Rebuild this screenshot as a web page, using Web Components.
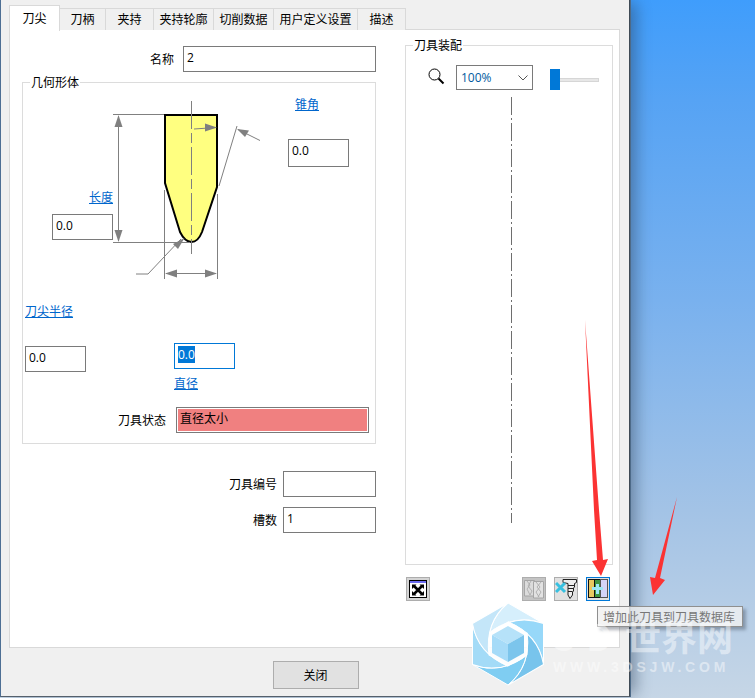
<!DOCTYPE html>
<html lang="zh">
<head>
<meta charset="utf-8">
<title>刀具</title>
<style>
  html, body { margin: 0; height: 100%; overflow: hidden; }
  body { font: 12px/16px "Noto Sans CJK SC", "Noto Sans", sans-serif; color: #000; }
</style>
</head>
<body>

<desk-top>
  <cam-window>
    <tab-strip slot="tabs">
      <tool-tab active width="51">刀尖</tool-tab>
      <tool-tab width="46">刀柄</tool-tab>
      <tool-tab width="48">夹持</tool-tab>
      <tool-tab width="60">夹持轮廓</tool-tab>
      <tool-tab width="60">切削数据</tool-tab>
      <tool-tab width="84">用户定义设置</tool-tab>
      <tool-tab width="48">描述</tool-tab>
    </tab-strip>

    <tip-page slot="left"></tip-page>
    <assembly-pane slot="right"></assembly-pane>

    <close-button slot="footer">关闭</close-button>
  </cam-window>
  <screen-notes></screen-notes>
</desk-top>

<script>
class DeskTop extends HTMLElement {
    constructor() {
        super();
        this.attachShadow({ mode: 'open' });
        this.shadowRoot.innerHTML = `
      <style>
        :host {
          display: block;
          position: relative;
          width: 755px;
          height: 698px;
          overflow: hidden;
          background: linear-gradient(180deg, #3f9dfc 0, #56a3f4 100px, #79b1ee 300px, #a3c3e6 510px, #c6d6e6 698px);
        }
      </style>
      <slot></slot>
    `;
    }
}

class CamWindow extends HTMLElement {
    constructor() {
        super();
        this.attachShadow({ mode: 'open' });
        this.shadowRoot.innerHTML = `
      <style>
        :host {
          display: flex;
          flex-direction: column;
          box-sizing: border-box;
          width: 630px;
          height: 697px;
          background: #f0f0f0;
          border-left: 1px solid #4d6f94;
          border-right: 1px solid #3f4a55;
          border-bottom: 1px solid #55606c;
          box-shadow: 1px 0 0 #4d6a88, 9px 0 14px -3px rgba(40, 60, 85, .45);
        }
        .tabs { padding: 5px 0 0 8px; height: 24px; flex: none; }
        .panel {
          flex: none;
          box-sizing: border-box;
          height: 619px;
          margin: 0 9px 0 8px;
          background: #fff;
          border: 1px solid #d9d9d9;
          padding: 15px 7px 0 12px;
          display: grid;
          grid-template-columns: 354px 208px;
          column-gap: 29px;
          align-items: start;
        }
        .footer { display: flex; justify-content: center; padding: 13px 0 0 1px; }
      </style>
      <div class="tabs"><slot name="tabs"></slot></div>
      <div class="panel">
        <slot name="left"></slot>
        <slot name="right"></slot>
      </div>
      <div class="footer"><slot name="footer"></slot></div>
    `;
    }
}

class TabStrip extends HTMLElement {
    constructor() {
        super();
        this.attachShadow({ mode: 'open' });
        this.shadowRoot.innerHTML = `
      <style>
        :host { display: flex; align-items: flex-end; height: 25px; position: relative; z-index: 1; }
      </style>
      <slot></slot>
    `;
    }
}

class ToolTab extends HTMLElement {
    constructor() {
        super();
        this.attachShadow({ mode: 'open' });
        const w = this.getAttribute('width');
        this.shadowRoot.innerHTML = `
      <style>
        :host {
          display: block;
          box-sizing: border-box;
          width: ${w}px;
          height: 22px;
          text-align: center;
          line-height: 20px;
          background: #f0f0f0;
          border: 1px solid #d9d9d9;
          border-left: 0;
          border-bottom: 0;
        }
        :host([active]) {
          height: 26px;
          background: #fff;
          border-left: 1px solid #d9d9d9;
          line-height: 23px;
          margin-bottom: -1px;
          padding-bottom: 3px;
        }
      </style>
      <slot></slot>
    `;
    }
}

class TextBox extends HTMLElement {
    constructor() {
        super();
        this.attachShadow({ mode: 'open' });
        this.shadowRoot.innerHTML = `
      <style>
        :host {
          display: block;
          box-sizing: border-box;
          height: 26px;
          border: 1px solid #7a7a7a;
          background: #fff;
          padding: 0 3px;
          line-height: 22px;
          font-family: "Open Sans", "Noto Sans", sans-serif;
          font-size: 12px;
          white-space: nowrap;
        }
        :host([focused]) { border-color: #0078d7; }
        :host([focused]) ::slotted(*) { background: #0078d7; color: #fff; }
      </style>
      <slot></slot>
    `;
    }
}

class GroupBox extends HTMLElement {
    constructor() {
        super();
        this.attachShadow({ mode: 'open' });
        this.shadowRoot.innerHTML = `
      <style>
        :host {
          display: block;
          position: relative;
          box-sizing: border-box;
          border: 1px solid #dcdcdc;
        }
        .legend {
          position: absolute;
          top: -9px;
          left: 7px;
          padding: 0 1px;
          background: #fff;
          line-height: 16px;
        }
      </style>
      <div class="legend">${this.getAttribute('label')}</div>
      <slot></slot>
    `;
    }
}

class LinkLabel extends HTMLElement {
    constructor() {
        super();
        this.attachShadow({ mode: 'open' });
        this.shadowRoot.innerHTML = `
      <style>
        :host { display: block; color: #0066cc; text-decoration: underline; line-height: 16px; white-space: nowrap; }
      </style>
      <slot></slot>
    `;
    }
}

// geometry drawing: svg uses page coordinates through its viewBox
class TipDiagram extends HTMLElement {
    constructor() {
        super();
        this.attachShadow({ mode: 'open' });
        this.shadowRoot.innerHTML = `
      <style>
        :host { display: block; position: relative; width: 352px; height: 324px; }
        svg { position: absolute; left: 0; top: 0; }
        .at { position: absolute; }
        text-box.at { width: 61px; }
      </style>
      <svg width="352" height="324" viewBox="23 83 352 324">
        <path d="M165 115H217V187L202 232Q198 242 191.500 242Q185 242 180 232L165 183Z" fill="#ffff80" stroke="#000" stroke-width="2"/>
        <g stroke="#808080" stroke-width="1" fill="none" shape-rendering="crispEdges">
          <path d="M191.500 101V254" stroke-dasharray="28 4 10 4"/>
          <path d="M113 114.500H164M113 242.500H190M118.500 116V241"/>
          <path d="M164.500 190V279M217.500 194V279M166 273.500H216"/>
        </g>
        <g stroke="#808080" stroke-width="1" fill="none">
          <path d="M194 129L216 127.500M219 186L237 126M260 140.500L238 129.500M136 274H148L181 239"/>
        </g>
        <g fill="#808080">
          <path d="M118.500 115L122.500 127H114.500Z"/>
          <path d="M118.500 242L122.500 230H114.500Z"/>
          <path d="M165 273.500L177 269.500V277.500Z"/>
          <path d="M217 273.500L205 269.500V277.500Z"/>
          <path d="M217 127.500L205 123.500V131.500Z"/>
          <path d="M237 129L249 130.500L245 137Z"/>
          <path d="M184.500 238L178 249L173 244Z"/>
        </g>
      </svg>
      <link-label class="at" style="left:272px;top:13px">锥角</link-label>
      <text-box class="at" style="left:265px;top:56px;height:28px">0.0</text-box>
      <link-label class="at" style="left:66px;top:106px">长度</link-label>
      <text-box class="at" style="left:29px;top:131px">0.0</text-box>
      <link-label class="at" style="left:2px;top:220px">刀尖半径</link-label>
      <text-box class="at" style="left:2px;top:263px">0.0</text-box>
      <text-box class="at" focused style="left:151px;top:260px"><span>0.0</span></text-box>
      <link-label class="at" style="left:151px;top:292px">直径</link-label>
    `;
    }
}

class TipPage extends HTMLElement {
    constructor() {
        super();
        this.attachShadow({ mode: 'open' });
        this.shadowRoot.innerHTML = `
      <style>
        :host { display: block; padding-top: 1px; }
        .name { display: grid; grid-template-columns: 152px 193px; column-gap: 9px; align-items: center; }
        .name span, .state span, .extra span { text-align: right; }
        group-box { margin-top: 10px; height: 362px; }
        .state { display: grid; grid-template-columns: 143px 193px; column-gap: 10px; align-items: center; }
        .status {
          box-sizing: border-box;
          height: 26px;
          border: 1px solid #7a7a7a;
          padding: 1px;
          background: #fff;
        }
        .status b {
          display: block;
          height: 22px;
          padding-left: 2px;
          font-weight: 400;
          line-height: 17px;
          background: #f08080;
        }
        .extra {
          display: grid;
          grid-template-columns: 255px 93px;
          column-gap: 6px;
          row-gap: 10px;
          margin-top: 27px;
          align-items: center;
        }
      </style>
      <div class="name"><span>名称</span><text-box>2</text-box></div>
      <group-box label="几何形体">
        <tip-diagram></tip-diagram>
        <div class="state">
          <span>刀具状态</span>
          <div class="status"><b>直径太小</b></div>
        </div>
      </group-box>
      <div class="extra">
        <span>刀具编号</span><text-box></text-box>
        <span>槽数</span><text-box>1</text-box>
      </div>
    `;
    }
}

class ToolButton extends HTMLElement {
    constructor() {
        super();
        this.attachShadow({ mode: 'open' });
        this.shadowRoot.innerHTML = `
      <style>
        :host {
          display: block;
          box-sizing: border-box;
          width: 24px;
          height: 24px;
          border: 1px solid #adadad;
          background: #e1e1e1;
        }
        :host([focused]) { border-color: #0078d7; }
        ::slotted(svg) { display: block; width: 22px; height: 22px; }
      </style>
      <slot></slot>
    `;
    }
}

class AssemblyPane extends HTMLElement {
    constructor() {
        super();
        this.attachShadow({ mode: 'open' });
        this.shadowRoot.innerHTML = `
      <style>
        :host { display: block; }
        group-box { height: 520px; }
        .inner { display: flex; flex-direction: column; height: 100%; }
        .zoom { display: flex; align-items: center; height: 25px; margin-top: 19px; padding-left: 22px; flex: none; }
        .zoom > svg { flex: none; margin-top: -3px; }
        .combo {
          box-sizing: border-box;
          width: 77px;
          height: 25px;
          margin-left: 11px;
          border: 1px solid #7a7a7a;
          padding-left: 4px;
          line-height: 22px;
          color: #005a9e;
          font-family: "Open Sans", "Noto Sans", sans-serif;
          display: flex;
          justify-content: space-between;
          align-items: center;
        }
        .combo svg { margin-right: 4px; }
        .slider { position: relative; width: 49px; height: 21px; margin: 4px 0 0 17px; }
        .slider i { position: absolute; left: 9px; right: 0; top: 9px; height: 4px; background: #e7e7e7; border: 1px solid #d6d6d6; box-sizing: border-box; }
        .slider b { position: absolute; left: 0; top: 0; width: 10px; height: 21px; background: #0078d7; }
        .track { flex: 1; padding-left: 105px; padding-top: 7px; }
        .track svg { display: block; }
        .tools { display: flex; gap: 8px; margin-top: 12px; padding: 0 3px 0 1px; }
        .tools .first { margin-right: auto; }
      </style>
      <group-box label="刀具装配">
        <div class="inner">
          <div class="zoom">
            <svg width="17" height="17" viewBox="0 0 17 17" fill="none" stroke="#000">
              <circle cx="6.500" cy="6.500" r="5.500" stroke-width="1"/>
              <path d="M10.500 10.500L15.500 15.500" stroke-width="2"/>
            </svg>
            <div class="combo">100%
              <svg width="10" height="6" viewBox="0 0 10 6" fill="none" stroke="#555"><path d="M.5 .5L5 5L9.500 .5"/></svg>
            </div>
            <div class="slider"><i></i><b></b></div>
          </div>
          <div class="track">
            <svg width="1" height="426" shape-rendering="crispEdges"><path d="M.5 0V426" stroke="#6e6e6e" stroke-dasharray="18 3 2 3"/></svg>
          </div>
        </div>
      </group-box>
      <div class="tools">
        <tool-button class="first" style="background:#d4d4d4">
          <svg viewBox="0 0 22 22">
            <rect x="2.500" y="2.500" width="17" height="17" fill="#fff" stroke="#000"/>
            <rect x="3" y="3" width="16" height="2" fill="#6a6af0"/>
            <path d="M7 8L15 16M15 8L7 16" stroke="#000" stroke-width="2.500"/>
            <path d="M5 6.500H9.500L5 11ZM17 6.500V11L12.500 6.500ZM5 17.500V13L9.500 17.500ZM17 17.500H12.500L17 13Z" fill="#000"/>
          </svg>
        </tool-button>
        <tool-button style="background:#c4c4c4">
          <svg viewBox="0 0 22 22" fill="#dcdcdc" stroke="#a6a6a6">
            <path d="M1.500 2.500H11.500V18H1.500Z"/>
            <path d="M10.500 3.500H20.500V20H10.500Z" fill="#e2e2e2"/>
            <path d="M4 3L7 7L4 11L7 17M8 3L5 8L9 13L7 17M13 4L17 9L13 14L16 19M18 4L14 9L18 14L15 19" fill="none" stroke-width=".8"/>
          </svg>
        </tool-button>
        <tool-button>
          <svg viewBox="0 0 22 22" fill="none">
            <path d="M8 1.500H21.500V4.500L19.500 5.500V9L18.500 10V13L17.500 14V17L15 20.500L13 17V5.500L8 4.500Z" fill="#eee" stroke="#222"/>
            <path d="M13 7.500H19.500M13 10.500H18.500M13 13.500H17.500" stroke="#222"/>
            <path d="M1 5L10 14M1 14L10 5" stroke="#38c0e0" stroke-width="3"/>
          </svg>
        </tool-button>
        <tool-button focused>
          <svg viewBox="0 0 22 22" shape-rendering="crispEdges">
            <rect x="1.500" y="1.500" width="6" height="18" fill="#e8c860" stroke="#111"/>
            <rect x="7.500" y="1.500" width="6" height="18" fill="#3f9440" stroke="#111"/>
            <rect x="13.500" y="1.500" width="7" height="18" fill="#d4d4f8" stroke="#555"/>
            <path d="M9 6H12V9H16V12H12V16H9V12H5V9H9Z" fill="#9ce6f6"/>
          </svg>
        </tool-button>
      </div>
    `;
    }
}

class CloseButton extends HTMLElement {
    constructor() {
        super();
        this.attachShadow({ mode: 'open' });
        this.shadowRoot.innerHTML = `
      <style>
        :host {
          display: block;
          box-sizing: border-box;
          width: 86px;
          height: 28px;
          text-align: center;
          line-height: 25px;
          background: #e1e1e1;
          border: 1px solid #adadad;
        }
      </style>
      <slot></slot>
    `;
    }
}

// things lying over the window: the tooltip, the red arrows and the watermark
class ScreenNotes extends HTMLElement {
    constructor() {
        super();
        this.attachShadow({ mode: 'open' });
        const fills = ['#d6effc', '#97d8f9', '#78c4ec', '#7fcdf2', '#a3dbf7', '#c4e6f9'];
        const petals = fills.map((f, k) =>
            `<path transform="translate(508 644) rotate(${k * 60})" fill="${f}" d="M0 -41L35.500 -20.500Q7 -31 -19 -11L-19 11Q-23.300 -21.600 0 -41Z"/>`
        ).join('');
        this.shadowRoot.innerHTML = `
      <style>
        :host { position: absolute; inset: 0; display: block; pointer-events: none; }
        svg { position: absolute; left: 0; top: 0; }
        .tip {
          position: absolute;
          left: 597px;
          top: 606px;
          box-sizing: border-box;
          width: 146px;
          height: 21px;
          padding-left: 5px;
          border: 1px solid #8f8f8f;
          background: rgba(240, 240, 240, .82);
          box-shadow: 3px 3px 3px rgba(60, 70, 85, .4);
          color: #777;
          line-height: 19px;
          white-space: nowrap;
        }
        .mark { position: absolute; color: #fff; opacity: .45; font-weight: 700; white-space: nowrap; }
        .big { left: 554px; top: 612px; font: 700 36px/46px "Noto Sans CJK SC", "Noto Sans", sans-serif; }
        .big span { letter-spacing: 11px; margin-right: 2px; }
        .url { left: 553px; top: 657px; font: 700 14px/20px "Liberation Sans", sans-serif; letter-spacing: 3.800px; }
      </style>
      <div class="tip">增加此刀具到刀具数据库</div>
      <div class="mark big"><span>3D</span>世界网</div>
      <div class="mark url">WWW.3DSJW.COM</div>
      <svg width="755" height="698" viewBox="0 0 755 698">
        <path d="M585 320L599 510L603 560L608 559L601 576L592 561L597 560L594 510Z" fill="#fb3333"/>
        <path d="M677 497L660 578L665 580L653 595L650 577L655 578Z" fill="#fb3333"/>
        <g stroke="#fff" stroke-width="1">${petals}</g>
        <path d="M508 622L527 633V655L508 666L489 655V633Z" fill="#fff" fill-opacity=".85"/>
        <path d="M508 626L524 635L508 644L492 635Z" fill="#b6e2f9"/>
        <path d="M492 635L508 644V662L492 653Z" fill="#a6dbf8"/>
        <path d="M524 635L508 644V662L524 653Z" fill="#7cc5ec"/>
      </svg>
    `;
    }
}

customElements.define('desk-top', DeskTop);
customElements.define('cam-window', CamWindow);
customElements.define('tab-strip', TabStrip);
customElements.define('tool-tab', ToolTab);
customElements.define('text-box', TextBox);
customElements.define('group-box', GroupBox);
customElements.define('link-label', LinkLabel);
customElements.define('tip-diagram', TipDiagram);
customElements.define('tip-page', TipPage);
customElements.define('tool-button', ToolButton);
customElements.define('assembly-pane', AssemblyPane);
customElements.define('close-button', CloseButton);
customElements.define('screen-notes', ScreenNotes);
</script>
</body>
</html>
